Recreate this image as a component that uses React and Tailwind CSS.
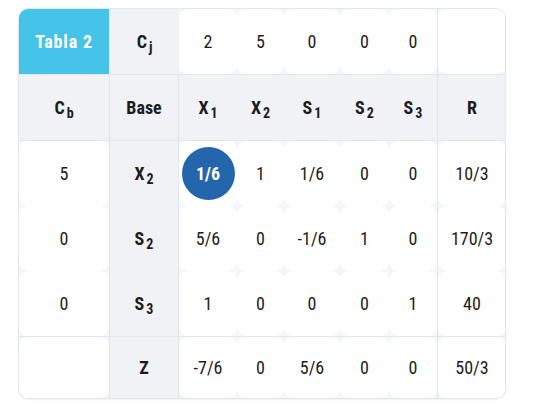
const cols = "grid-cols-[90px_70px_58px_47px_56px_49px_48px_69px]";

const font = { fontFamily: '"Roboto Condensed", "Liberation Sans Narrow", Roboto, sans-serif' };

function Sym({ b, s }) {
  return (
    <span className="font-bold">
      {b}
      {s ? <span className="text-[14px] ml-[2px] relative top-[4px]">{s}</span> : null}
    </span>
  );
}

function Cell({ children, gray, line = "", inner = "", pivot }) {
  return (
    <div className={`${gray ? "bg-[#f0f2f6]" : "bg-[#f4f6f9]"} ${line}`}>
      <div
        className={`h-full flex items-center justify-center ${
          gray ? "" : "bg-white rounded-[9px]"
        } ${inner}`}
      >
        {pivot ? (
          <div className="w-[53px] h-[53px] rounded-full bg-[#2466ab] text-white font-bold flex items-center justify-center">
            {children}
          </div>
        ) : (
          children
        )}
      </div>
    </div>
  );
}

const rows = [
  { cb: "5", base: ["X", "2"], vals: ["1/6", "1", "1/6", "0", "0"], r: "10/3" },
  { cb: "0", base: ["S", "2"], vals: ["5/6", "0", "-1/6", "1", "0"], r: "170/3" },
  { cb: "0", base: ["S", "3"], vals: ["1", "0", "0", "0", "1"], r: "40" },
];

export default function App() {
  return (
    <div className="w-[533px] h-[412px] bg-white pt-[8px] pl-[18px]" style={font}>
      <div className="w-[488px] rounded-[10px] border border-[#e3e6ea] overflow-hidden shadow-[0_1px_2px_rgba(0,0,0,0.06)] text-[18px] text-[#1c1c1c]">
        <div className={`grid ${cols} h-[65px]`}>
          <div className="bg-[#45c3e8] text-white font-bold flex items-center justify-center tracking-[0.8px]">
            Tabla 2
          </div>
          <Cell gray line="border-l border-[#e3e6ea]">
            <Sym b="C" s="j" />
          </Cell>
          {["2", "5", "0", "0", "0"].map((v, i) => (
            <Cell key={i}>{v}</Cell>
          ))}
          <Cell line="border-l border-[#e3e6ea]" inner="rounded-[0px] rounded-tr-[9px]"></Cell>
        </div>
        <div className={`grid ${cols} h-[67px] border-y border-[#e3e6ea] bg-[#f0f2f6]`}>
          <Cell gray><Sym b="C" s="b" /></Cell>
          <Cell gray line="border-x border-[#e3e6ea]"><Sym b="Base" /></Cell>
          <Cell gray><Sym b="X" s="1" /></Cell>
          <Cell gray><Sym b="X" s="2" /></Cell>
          <Cell gray><Sym b="S" s="1" /></Cell>
          <Cell gray><Sym b="S" s="2" /></Cell>
          <Cell gray><Sym b="S" s="3" /></Cell>
          <Cell gray line="border-l border-[#e3e6ea]"><Sym b="R" /></Cell>
        </div>
        {rows.map((row, ri) => (
          <div key={ri} className={`grid ${cols} h-[65px]`}>
            <Cell>{row.cb}</Cell>
            <Cell gray line="border-x border-[#e3e6ea]"><Sym b={row.base[0]} s={row.base[1]} /></Cell>
            {row.vals.map((v, i) => (
              <Cell key={i} pivot={ri === 0 && i === 0}>{v}</Cell>
            ))}
            <Cell line="border-l border-[#e3e6ea]">{row.r}</Cell>
          </div>
        ))}
        <div className={`grid ${cols} h-[62px] border-t border-[#e3e6ea]`}>
          <Cell></Cell>
          <Cell gray line="border-x border-[#e3e6ea]"><Sym b="Z" /></Cell>
          {["-7/6", "0", "5/6", "0", "0"].map((v, i) => (
            <Cell key={i}>{v}</Cell>
          ))}
          <Cell line="border-l border-[#e3e6ea]">50/3</Cell>
        </div>
      </div>
    </div>
  );
}
